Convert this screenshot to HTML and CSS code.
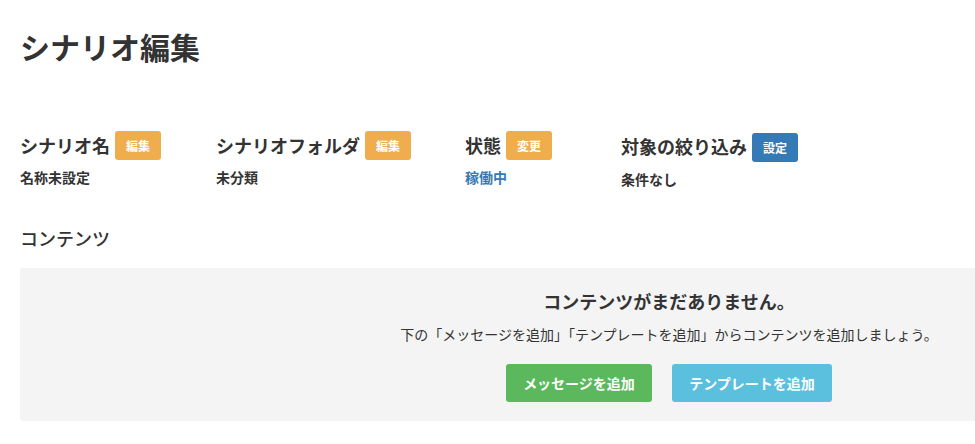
FILE: index.html
```html
<!DOCTYPE html>
<html lang="ja">

<head>
    <meta charset="UTF-8">
    <meta name="viewport" content="width=device-width, initial-scale=1.0">
    <title>シナリオ編集</title>
    <link rel="stylesheet" href="styles.css">
</head>

<body>
    <div class="page">
        <h1 class="page-title">シナリオ編集</h1>

        <div class="info-row">
            <div class="info-item item-name">
                <h3>シナリオ名 <span class="tag tag-warning">編集</span></h3>
                <p>名称未設定</p>
            </div>
            <div class="info-item item-folder">
                <h3>シナリオフォルダ <span class="tag tag-warning">編集</span></h3>
                <p>未分類</p>
            </div>
            <div class="info-item item-status">
                <h3>状態 <span class="tag tag-warning">変更</span></h3>
                <p class="status-on">稼働中</p>
            </div>
            <div class="info-item">
                <h3>対象の絞り込み <span class="tag tag-primary">設定</span></h3>
                <p>条件なし</p>
            </div>
        </div>

        <h3 class="section-title">コンテンツ</h3>
        <div class="empty-box">
            <h4>コンテンツがまだありません。</h4>
            <p>下の「メッセージを追加」「テンプレートを追加」からコンテンツを追加しましょう。</p>
            <div class="btn-row">
                <button class="btn btn-success">メッセージを追加</button>
                <button class="btn btn-info">テンプレートを追加</button>
            </div>
        </div>
    </div>
</body>

</html>
```

FILE: styles.css
```css
body, html {
    margin: 0;
    padding: 0;
    font-family: "Noto Sans CJK JP", "Noto Sans", sans-serif;
    background-color: #fff;
    color: #333;
}

.page {
    padding: 25px 20px 20px;
}

.page-title {
    margin: 0;
    font-size: 30px;
    font-weight: bold;
    line-height: 42px;
}

.info-row {
    display: flex;
    margin-top: 63px;
}

.info-item h3 {
    margin: 0;
    font-size: 18px;
    font-weight: bold;
    line-height: 30px;
    display: flex;
    align-items: center;
    gap: 5px;
}

.info-item p {
    margin: 7px 0 0;
    font-size: 14px;
    font-weight: bold;
    line-height: 20px;
}

.item-name { width: 196px; }
.item-folder { width: 249px; }
.item-status { width: 156px; }

.status-on {
    color: #337ab7;
}

.tag {
    display: inline-block;
    color: white;
    font-size: 12px;
    font-weight: bold;
    line-height: 29px;
    padding: 0 11px;
    border-radius: 3px;
}

.tag-warning {
    background-color: #f0ad4e;
}

.tag-primary {
    background-color: #337ab7;
    margin-top: 3px;
}

.section-title {
    margin: 36px 0 0;
    font-size: 18px;
    font-weight: 500;
    line-height: 26px;
}

.empty-box {
    margin-top: 17px;
    width: 1298px;
    background-color: #f4f4f4;
    border-radius: 3px;
    padding: 20px 0 19px;
    text-align: center;
}

.empty-box h4 {
    margin: 0;
    font-size: 18px;
    font-weight: bold;
    line-height: 26px;
}

.empty-box p {
    margin: 10px 0 0;
    font-size: 14px;
    line-height: 20px;
}

.btn-row {
    display: flex;
    justify-content: center;
    gap: 20px;
    margin-top: 20px;
}

.btn {
    border: none;
    border-radius: 3px;
    color: white;
    font-family: inherit;
    font-size: 14px;
    font-weight: bold;
    height: 38px;
    padding: 0 12px;
    cursor: pointer;
}

.btn-success {
    background-color: #5cb85c;
    width: 146px;
}

.btn-info {
    background-color: #5bc0de;
    width: 160px;
}
```
